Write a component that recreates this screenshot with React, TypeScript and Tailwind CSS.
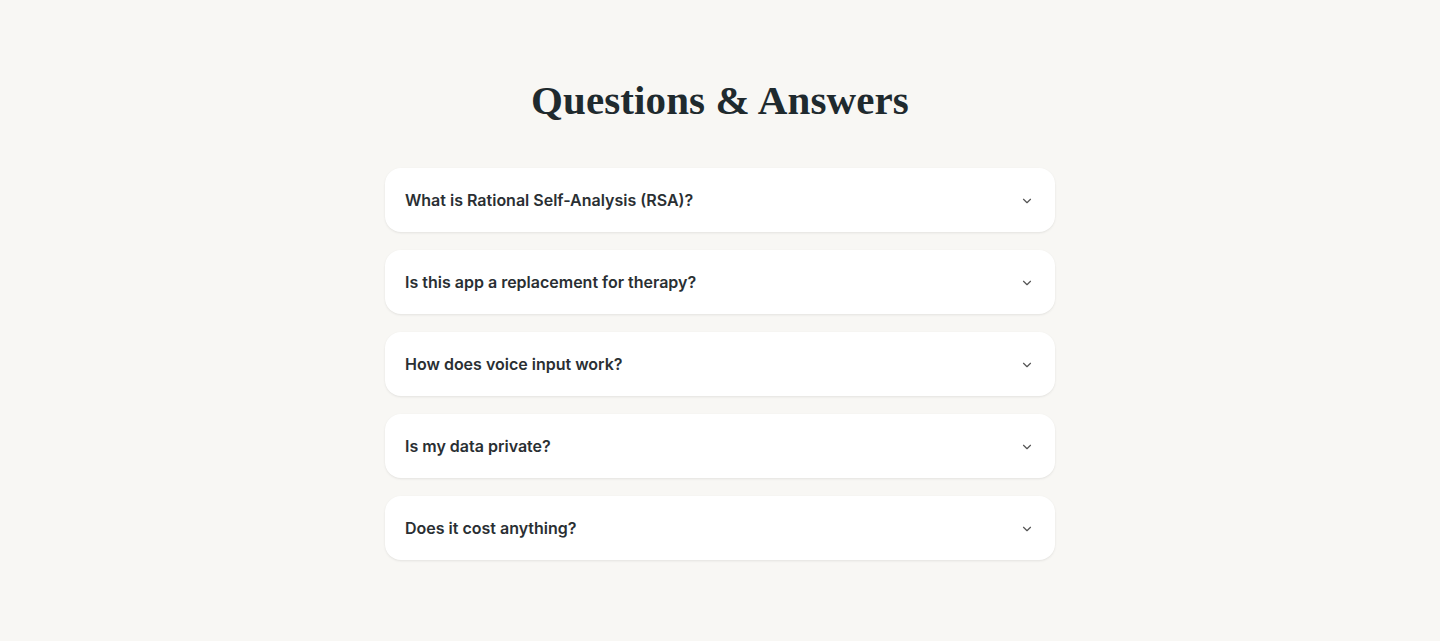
import { ChevronDown } from 'lucide-react'

const faqs = [
  'What is Rational Self-Analysis (RSA)?',
  'Is this app a replacement for therapy?',
  'How does voice input work?',
  'Is my data private?',
  'Does it cost anything?',
]

export default function App() {
  return (
    <div className="min-h-[641px] bg-[#f8f7f4] pt-[76px] font-['Inter',sans-serif] text-[#1f2a2e]">
      <h1 className="text-center font-['Liberation_Serif',serif] text-[41px] font-bold leading-[48px] tracking-[0.1px]">
        Questions &amp; Answers
      </h1>

      <div className="mx-auto mt-[44px] flex w-[670px] flex-col gap-[18px]">
        {faqs.map((q) => (
          <div
            key={q}
            className="flex h-[64px] items-center justify-between rounded-2xl bg-white pl-5 pr-[21px] shadow-[0_1px_3px_rgba(0,0,0,0.06),0_1px_2px_rgba(0,0,0,0.03)]"
          >
            <span className="text-[16px] font-semibold text-[#2a2f33]">{q}</span>
            <ChevronDown className="mt-[1px] h-[14px] w-[14px] text-[#555]" strokeWidth={2} />
          </div>
        ))}
      </div>
    </div>
  )
}
